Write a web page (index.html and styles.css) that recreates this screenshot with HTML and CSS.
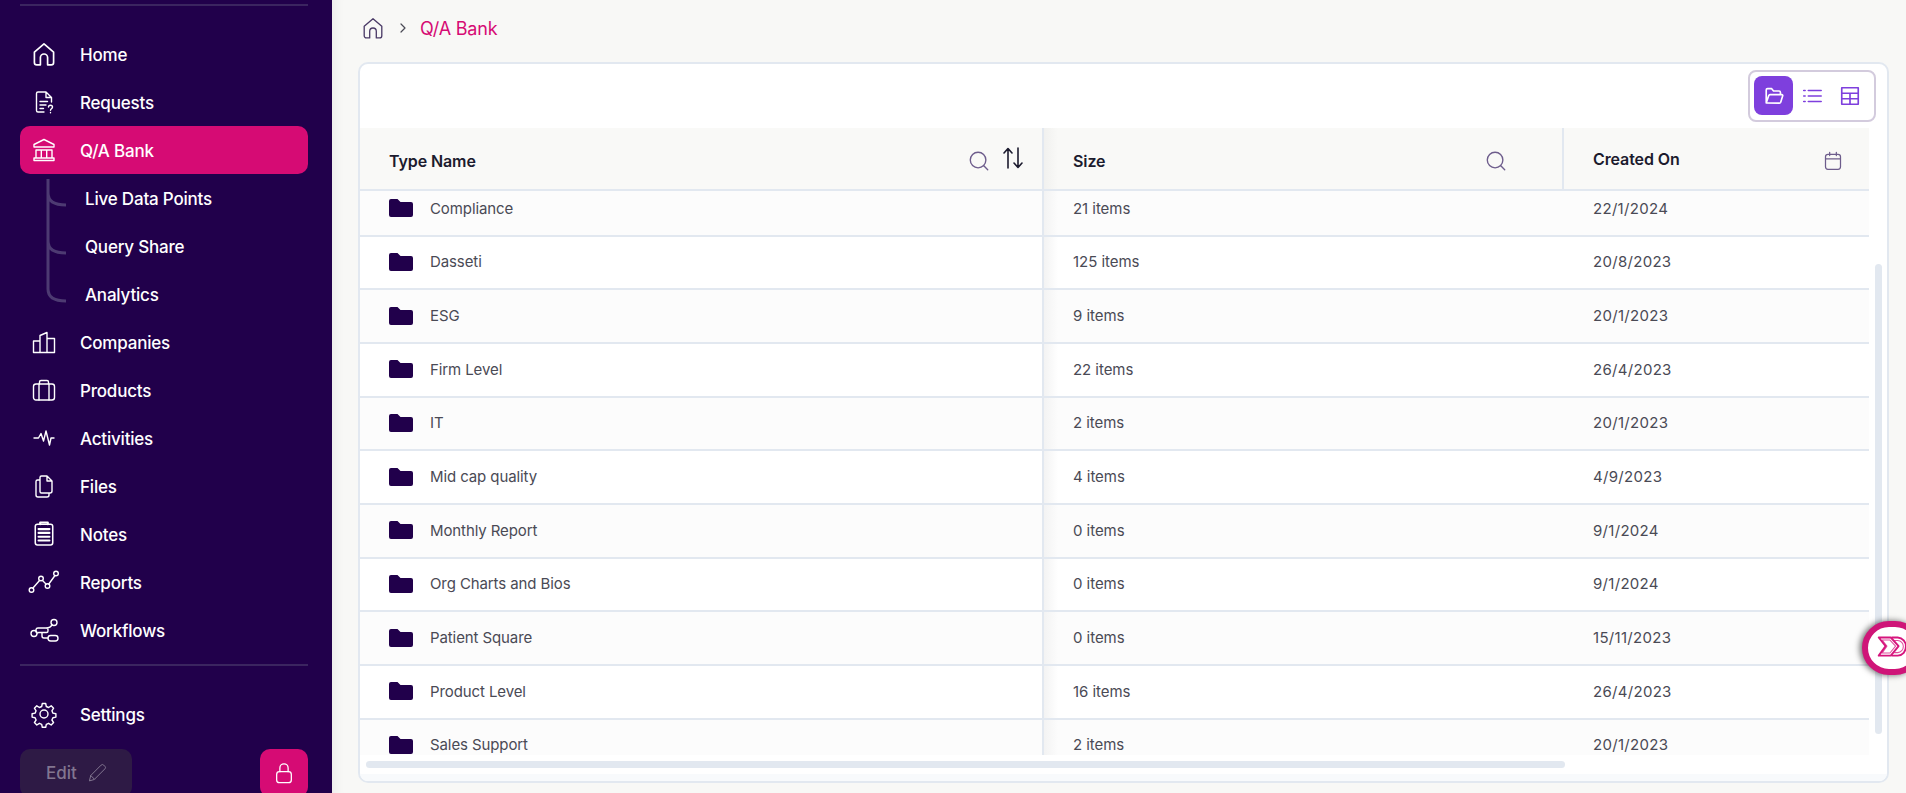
FILE: index.html
```html
<!DOCTYPE html>
<html lang="en">
<head>
<meta charset="utf-8">
<title>Q/A Bank</title>
<link rel="stylesheet" href="styles.css">
</head>
<body>
<aside class="sidebar">
  <div class="rule rule-top"></div>
  <nav class="nav">
    <a class="nav-item"><svg class="ico" viewBox="2 2 20 20"><path d="M4 10.500 12 3.500l8 7V19a2 2 0 0 1-2 2h-3v-6a3 3 0 0 0-6 0v6H6a2 2 0 0 1-2-2z"/></svg><span>Home</span></a>
    <a class="nav-item"><svg class="ico" viewBox="0 0 24 24"><path d="M12 22H6a1.500 1.500 0 0 1-1.500-1.500v-17A1.500 1.500 0 0 1 6 2h8l5.500 5.500V12M14 2v5.500h5.500M8 11.500h7.500M8 15h6M8 18.500h3.500M16.500 17c0-2.400 4-2.400 4 0 0 1.700-2 1.700-2 3.300M18.500 22.500v.2"/></svg><span>Requests</span></a>
    <a class="nav-item active"><svg class="ico" viewBox="0 0 24 24"><path d="M2 6.500 12 1.500 22 6.500v2.500H2zM4 12h16M4 20V12M9.300 20V12M14.700 20V12M20 20V12M2 20h20v2.500H2z"/></svg><span>Q/A Bank</span></a>
    <div class="sub">
      <svg class="tree" viewBox="0 0 24 128"><path d="M2 0v14q0 12 18 12M2 14v48q0 12 18 12M2 62v48q0 12 18 12"/></svg>
      <a class="sub-item">Live Data Points</a>
      <a class="sub-item">Query Share</a>
      <a class="sub-item">Analytics</a>
    </div>
    <a class="nav-item"><svg class="ico" viewBox="0 0 24 24"><path d="M1.500 22.500V11h6.500v11.500M8 11V5.500L15 2.500v20M15 8.500h7.500v14h-21"/></svg><span>Companies</span></a>
    <a class="nav-item"><svg class="ico" viewBox="0 0 24 24"><rect x="1.500" y="6" width="21" height="16" rx="2.500"/><path d="M7 22V6M17 22V6M7.500 6V4a1.500 1.500 0 0 1 1.500-1.500h6A1.500 1.500 0 0 1 16.500 4v2"/></svg><span>Products</span></a>
    <a class="nav-item"><svg class="ico" viewBox="0 0 24 24"><path d="M2 12h4.500l2.500-4.500 2.500 7.500 2.500-10 3.500 14 1.500-7H22"/></svg><span>Activities</span></a>
    <a class="nav-item"><svg class="ico" viewBox="0 0 24 24"><path d="M8 3.500A1.500 1.500 0 0 1 9.500 2h5.500l5 5v10a2 2 0 0 1-2 2H9.500A1.500 1.500 0 0 1 8 17.500zM15 2v5h5M8 6H5.500A1.500 1.500 0 0 0 4 7.500V21a2 2 0 0 0 2 2h9a2 2 0 0 0 2-2v-2"/></svg><span>Files</span></a>
    <a class="nav-item"><svg class="ico" viewBox="2 1.500 20 22"><rect x="4" y="3.500" width="16" height="19" rx="2"/><path class="thick" d="M8.500 3.500V2h7v1.500M7 8h10M7 11.500h10M7 15h10M7 18.500h10"/></svg><span>Notes</span></a>
    <a class="nav-item"><svg class="ico ico-wide" viewBox="1 0 30 24"><circle cx="3.500" cy="20" r="2.300"/><circle cx="13" cy="8.500" r="2.300"/><circle cx="19.500" cy="16" r="2.300"/><circle cx="28" cy="3.500" r="2.300"/><path d="M5 18 11.500 10.500M14.500 10.500l3.500 3.500M20.800 14 27 5.500"/></svg><span>Reports</span></a>
    <a class="nav-item"><svg class="ico ico-wide" viewBox="0 0 32 24"><circle cx="6" cy="15.500" r="3"/><circle cx="26" cy="4.500" r="3"/><rect x="20" y="17.500" width="10" height="5.500" rx="2.700"/><path d="M8 13v-1.500a2 2 0 0 1 2-1.500h8a2 2 0 0 1 2 1.500V13a1.500 1.500 0 0 1-1.500 1.500h-8A1.500 1.500 0 0 1 8 13zM18 10c1 0 5-.5 6-3.500M14 14.500v3.500a2 2 0 0 0 2 2h4"/></svg><span>Workflows</span></a>
  </nav>
  <div class="rule rule-bottom"></div>
  <a class="nav-item settings"><svg class="ico" viewBox="0 0 24 24"><circle cx="12" cy="12" r="4"/><path d="M10.300 1.500h3.400l.6 3 2.300 1 2.600-1.700 2.400 2.400-1.700 2.600 1 2.300 3 .6v3.400l-3 .6-1 2.300 1.700 2.600-2.400 2.400-2.600-1.700-2.300 1-.6 3h-3.400l-.6-3-2.300-1-2.600 1.700-2.400-2.400 1.700-2.600-1-2.300-3-.6v-3.400l3-.6 1-2.300-1.700-2.600 2.400-2.400 2.600 1.700 2.300-1z"/></svg><span>Settings</span></a>
  <div class="side-foot">
    <button class="edit-btn">Edit <svg class="pencil" viewBox="0 0 24 24"><path d="M3 21l1.500-6L17 2.500a2.100 2.100 0 0 1 3 0l1.500 1.500a2.100 2.100 0 0 1 0 3L9 19.500zM4.500 15 9 19.500"/></svg></button>
    <button class="lock-btn"><svg viewBox="0 0 24 24"><rect x="4" y="10.500" width="16" height="12" rx="3"/><path d="M7.500 10.500V6.500a4.500 4.500 0 0 1 9 0v4"/></svg></button>
  </div>
</aside>

<main class="main">
  <div class="crumbs">
    <svg class="crumb-home" viewBox="2 2 20 20"><path d="M4 10.500 12 3.500l8 7V19a2 2 0 0 1-2 2h-3v-6a3 3 0 0 0-6 0v6H6a2 2 0 0 1-2-2z"/></svg>
    <svg class="crumb-sep" viewBox="0 0 10 12"><path d="M3 2l4 4-4 4"/></svg>
    <span class="crumb-current">Q/A Bank</span>
  </div>

  <section class="card">
    <div class="toolbar">
      <div class="toggle">
        <button class="toggle-btn on"><svg viewBox="0 0 24 24"><path d="M3.500 19V5.500A1.500 1.500 0 0 1 5 4h4.500l2 2.500h6A1.500 1.500 0 0 1 19 8v2.500M3.500 19.500l2.800-8a1.500 1.500 0 0 1 1.400-1h12.800a1 1 0 0 1 1 1.300l-2.200 7a1.500 1.500 0 0 1-1.400 1z"/></svg></button>
        <button class="toggle-btn"><svg viewBox="0 0 24 24"><path d="M8 6h14M8 12h14M8 18h14M3 6h1.500M3 12h1.500M3 18h1.500"/></svg></button>
        <button class="toggle-btn"><svg viewBox="0 0 24 24"><path d="M3 3h18v18H3zM3 9h18M3 15h18M12 9v12"/></svg></button>
      </div>
    </div>

    <div class="table-area">
      <div class="table">
        <div class="thead">
          <div class="th th-name">
            <span class="th-label">Type Name</span>
            <svg class="th-ico search" viewBox="0 0 24 24"><circle cx="11" cy="11" r="8.500"/><path d="M17.500 17.500l4 4"/></svg>
            <svg class="sort" viewBox="0 0 24 24"><path d="M7 22V3M3 7l4-4.500L11 7M17 2v19M13 17l4 4.500 4-4.500"/></svg>
          </div>
          <div class="th th-size">
            <span class="th-label">Size</span>
            <svg class="th-ico search" viewBox="0 0 24 24"><circle cx="11" cy="11" r="8.500"/><path d="M17.500 17.500l4 4"/></svg>
          </div>
          <div class="th th-date">
            <span class="th-label th-label-date">Created On</span>
            <svg class="th-ico cal" viewBox="0 0 24 24"><rect x="3" y="4" width="18" height="18" rx="3"/><path d="M3 9.500h18M8 1.500v4M16 1.500v4"/></svg>
          </div>
        </div>
        <div class="tbody">
          <div class="rows">
            <div class="row alt"><div class="td td-name"><svg class="folder" viewBox="0 0 24 18"><path d="M0 2a2 2 0 0 1 2-2h6.500l3 3H22a2 2 0 0 1 2 2v11a2 2 0 0 1-2 2H2a2 2 0 0 1-2-2z"/></svg>Compliance</div><div class="td td-size">21 items</div><div class="td td-date">22/1/2024</div></div>
            <div class="row"><div class="td td-name"><svg class="folder" viewBox="0 0 24 18"><path d="M0 2a2 2 0 0 1 2-2h6.500l3 3H22a2 2 0 0 1 2 2v11a2 2 0 0 1-2 2H2a2 2 0 0 1-2-2z"/></svg>Dasseti</div><div class="td td-size">125 items</div><div class="td td-date">20/8/2023</div></div>
            <div class="row alt"><div class="td td-name"><svg class="folder" viewBox="0 0 24 18"><path d="M0 2a2 2 0 0 1 2-2h6.500l3 3H22a2 2 0 0 1 2 2v11a2 2 0 0 1-2 2H2a2 2 0 0 1-2-2z"/></svg>ESG</div><div class="td td-size">9 items</div><div class="td td-date">20/1/2023</div></div>
            <div class="row"><div class="td td-name"><svg class="folder" viewBox="0 0 24 18"><path d="M0 2a2 2 0 0 1 2-2h6.500l3 3H22a2 2 0 0 1 2 2v11a2 2 0 0 1-2 2H2a2 2 0 0 1-2-2z"/></svg>Firm Level</div><div class="td td-size">22 items</div><div class="td td-date">26/4/2023</div></div>
            <div class="row alt"><div class="td td-name"><svg class="folder" viewBox="0 0 24 18"><path d="M0 2a2 2 0 0 1 2-2h6.500l3 3H22a2 2 0 0 1 2 2v11a2 2 0 0 1-2 2H2a2 2 0 0 1-2-2z"/></svg>IT</div><div class="td td-size">2 items</div><div class="td td-date">20/1/2023</div></div>
            <div class="row"><div class="td td-name"><svg class="folder" viewBox="0 0 24 18"><path d="M0 2a2 2 0 0 1 2-2h6.500l3 3H22a2 2 0 0 1 2 2v11a2 2 0 0 1-2 2H2a2 2 0 0 1-2-2z"/></svg>Mid cap quality</div><div class="td td-size">4 items</div><div class="td td-date">4/9/2023</div></div>
            <div class="row alt"><div class="td td-name"><svg class="folder" viewBox="0 0 24 18"><path d="M0 2a2 2 0 0 1 2-2h6.500l3 3H22a2 2 0 0 1 2 2v11a2 2 0 0 1-2 2H2a2 2 0 0 1-2-2z"/></svg>Monthly Report</div><div class="td td-size">0 items</div><div class="td td-date">9/1/2024</div></div>
            <div class="row"><div class="td td-name"><svg class="folder" viewBox="0 0 24 18"><path d="M0 2a2 2 0 0 1 2-2h6.500l3 3H22a2 2 0 0 1 2 2v11a2 2 0 0 1-2 2H2a2 2 0 0 1-2-2z"/></svg>Org Charts and Bios</div><div class="td td-size">0 items</div><div class="td td-date">9/1/2024</div></div>
            <div class="row alt"><div class="td td-name"><svg class="folder" viewBox="0 0 24 18"><path d="M0 2a2 2 0 0 1 2-2h6.500l3 3H22a2 2 0 0 1 2 2v11a2 2 0 0 1-2 2H2a2 2 0 0 1-2-2z"/></svg>Patient Square</div><div class="td td-size">0 items</div><div class="td td-date">15/11/2023</div></div>
            <div class="row"><div class="td td-name"><svg class="folder" viewBox="0 0 24 18"><path d="M0 2a2 2 0 0 1 2-2h6.500l3 3H22a2 2 0 0 1 2 2v11a2 2 0 0 1-2 2H2a2 2 0 0 1-2-2z"/></svg>Product Level</div><div class="td td-size">16 items</div><div class="td td-date">26/4/2023</div></div>
            <div class="row alt"><div class="td td-name"><svg class="folder" viewBox="0 0 24 18"><path d="M0 2a2 2 0 0 1 2-2h6.500l3 3H22a2 2 0 0 1 2 2v11a2 2 0 0 1-2 2H2a2 2 0 0 1-2-2z"/></svg>Sales Support</div><div class="td td-size">2 items</div><div class="td td-date">20/1/2023</div></div>
          </div>
        </div>
      </div>
      <div class="vtrack"><div class="vthumb"></div></div>
    </div>
    <div class="htrack"><div class="hthumb"></div></div>
    <div class="card-strip"></div>
  </section>
</main>

<div class="widget"><svg viewBox="0 0 44 30"><path d="M2 4h14l9 10-9 11H2l8-11z"/><path class="widget-inner" d="M6 7h9l6.500 7-6.500 8H6l5.500-8z"/><path d="M17 4h7a10 10 0 0 1 9.500 10.500A10 10 0 0 1 24 25h-7"/><path class="widget-inner" d="M20 7.500h4a7 7 0 0 1 6.500 7 7 7 0 0 1-6.500 7h-4"/></svg></div>
</body>
</html>
```
FILE: styles.css
```css
* { box-sizing: border-box; }
html, body { height: 100%; }
body {
  margin: 0;
  width: 1906px;
  height: 793px;
  display: flex;
  overflow: hidden;
  font-family: Inter, "Liberation Sans", sans-serif;
  background: #f8f8f6;
  color: #4a4a55;
}
button { font-family: inherit; border: 0; padding: 0; cursor: pointer; }
svg { display: block; fill: none; stroke: currentColor; stroke-linecap: round; stroke-linejoin: round; }

/* Sidebar */
.sidebar {
  flex: 0 0 332px;
  height: 793px;
  background: #21004b;
  padding: 4px 24px 0 20px;
  overflow: hidden;
  color: #fff;
}
.rule { height: 2px; background: #3b2560; }
.nav { margin-top: 24px; }
.nav-item {
  height: 48px;
  display: flex;
  align-items: center;
  padding-left: 12px;
  font-size: 17px;
  font-weight: 500;
  letter-spacing: -0.2px;
  color: #fff;
}
.nav-item.active { background: #d60b74; border-radius: 10px; }
.nav-item span { margin-left: 24px; padding-top: 1px; }
.ico { width: 24px; height: 24px; flex: none; stroke-width: 1.4; overflow: visible; }
.ico-wide { width: 32px; margin: 0 -4px; }
.thick { stroke-width: 1.900; }
.sub { position: relative; }
.tree {
  position: absolute;
  left: 26px;
  top: 5px;
  width: 24px;
  height: 128px;
  color: #4d3a72;
  stroke-width: 3;
  stroke-linecap: butt;
}
.sub-item {
  height: 48px;
  display: flex;
  align-items: center;
  padding: 1px 0 0 65px;
  font-size: 17px;
  font-weight: 500;
  letter-spacing: -0.2px;
  color: #fff;
}
.rule-bottom { margin-top: 10px; }
.settings { margin-top: 24px; }
.side-foot { display: flex; justify-content: space-between; margin-top: 11px; }
.edit-btn {
  width: 112px;
  height: 48px;
  display: flex;
  align-items: center;
  padding-left: 26px;
  gap: 10px;
  border-radius: 10px;
  background: #2e1a45;
  color: #827690;
  font-size: 17px;
  font-weight: 500;
}
.pencil { width: 20px; height: 20px; stroke-width: 1.2; }
.lock-btn {
  width: 48px;
  height: 48px;
  display: flex;
  align-items: center;
  justify-content: center;
  border-radius: 10px;
  background: #d60b74;
  color: #fff;
}
.lock-btn svg { width: 22px; height: 24px; stroke-width: 1.400; }

/* Main */
.main {
  flex: 1;
  min-width: 0;
  height: 793px;
  padding: 0 17px 0 26px;
  box-shadow: inset 14px 0 14px -14px rgba(0, 0, 0, 0.08);
}
.crumbs { height: 62px; display: flex; align-items: center; padding: 0 0 6px 4px; }
.crumb-home { width: 22px; height: 22px; color: #4a3a66; stroke-width: 1.200; }
.crumb-sep { width: 10px; height: 12px; margin-left: 13.5px; color: #4a4a55; stroke-width: 1.200; }
.crumb-current { margin-left: 12.5px; font-size: 18px; color: #d60b74; letter-spacing: -0.2px; }

.card {
  height: 721px;
  background: #fff;
  border: 2px solid #e2e8f0;
  border-radius: 10px;
  overflow: hidden;
}
.toolbar { height: 64px; display: flex; justify-content: flex-end; padding: 6px 11px 0 0; }
.toggle {
  height: 52px;
  width: 128px;
  display: flex;
  padding: 4px;
  border: 2px solid #d3cbdd;
  border-radius: 8px;
}
.toggle-btn {
  width: 39px;
  height: 39px;
  display: flex;
  align-items: center;
  justify-content: center;
  background: transparent;
  border-radius: 8px;
  color: #7e3fdd;
}
.toggle-btn svg { width: 22px; height: 22px; stroke-width: 1.800; }
.toggle-btn + .toggle-btn { margin-left: -1px; }
.toggle-btn.on { background: #7e3fdd; color: #fff; }

.table-area { display: flex; height: 627px; }
.table { flex: 1; min-width: 0; display: flex; flex-direction: column; }
.vtrack { flex: 0 0 18px; padding: 136px 5px 0 6px; }
.vthumb { height: 470px; background: #e2e8f0; border-radius: 4px; }

.thead {
  flex: none;
  height: 63px;
  display: grid;
  grid-template-columns: 684px 520px 1fr;
  background: #f9f9f7;
  border-bottom: 2px solid #e2e8f0;
}
.th { display: flex; align-items: center; min-width: 0; border-right: 2px solid #e2e8f0; }
.th-date { border-right: 0; padding: 0 26px 0 29px; }
.th-name { padding: 0 17px 0 29px; }
.th-size { padding: 0 54px 0 29px; background: linear-gradient(90deg, #f1f1ef, #f9f9f7 14px); }
.th-label { flex: 1; margin-top: 5px; font-size: 16px; font-weight: 600; color: #1c1b2e; letter-spacing: -0.1px; }
.th-label-date { margin-top: 1px; }
.th-ico { width: 20px; height: 20px; margin-top: 5px; color: #6e5d8c; stroke-width: 1.500; flex: none; }
.search { width: 22px; height: 22px; margin-right: 1px; }
.sort { width: 24px; height: 24px; margin: -1px 0 0 10px; color: #1c1b2e; stroke-width: 1.600; flex: none; }

.tbody { height: 564px; overflow: hidden; }
.rows { margin-top: -8px; }
.row {
  height: 53.67px;
  display: grid;
  grid-template-columns: 684px 520px 1fr;
  background: #fff;
  border-bottom: 2px solid #e2e8f0;
  font-size: 15px;
  letter-spacing: -0.1px;
}
.row.alt { background: #fcfcfc; }
.td { display: flex; align-items: center; min-width: 0; padding-bottom: 1px; }
.td-name { padding-left: 29px; border-right: 2px solid #e2e8f0; }
.td-size { padding-left: 29px; letter-spacing: -0.05px; background: linear-gradient(90deg, #f3f3f3, transparent 14px); }
.td-date { padding-left: 29px; letter-spacing: 0.3px; }
.folder { width: 24px; height: 18px; margin-right: 17px; fill: #21004b; stroke: none; }

.htrack { height: 7px; margin: 6px 0 0 6px; }
.hthumb { width: 1199px; height: 7px; background: #e2e8f0; border-radius: 4px; }
.card-strip { height: 7px; margin-top: 6px; background: #f8fafc; }

/* Floating launcher */
.widget {
  position: fixed;
  left: 1862px;
  top: 621px;
  width: 60px;
  height: 54px;
  padding: 6px 0 0 9px;
  background: #fff;
  border: 6px solid #cf1578;
  border-radius: 27px;
  box-shadow: -2px 0 6px rgba(0, 0, 0, 0.6);
  color: #d6157d;
}
.widget svg { width: 38px; height: 28px; stroke-width: 2.200; stroke-linecap: butt; }
.widget .widget-inner { stroke-width: 1.200; opacity: .75; }
```
